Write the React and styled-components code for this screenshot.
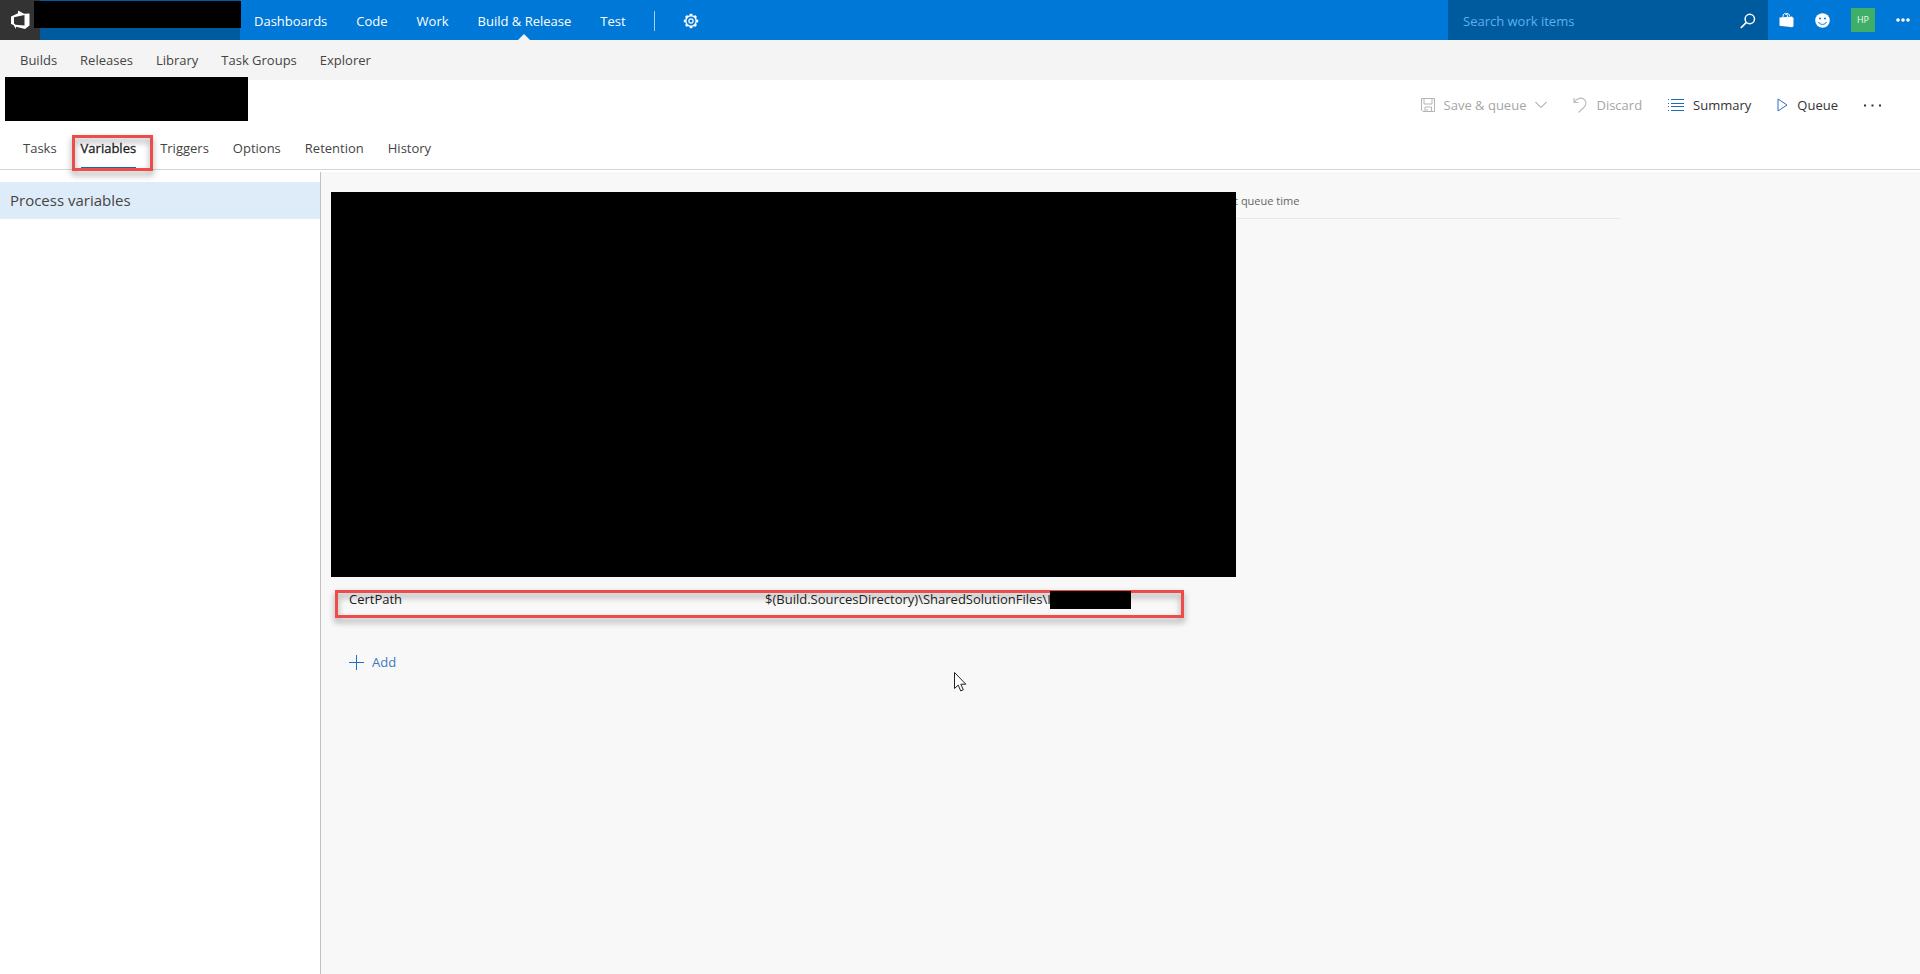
import React, { useState } from 'react';
import styled, { createGlobalStyle, css } from 'styled-components';

const GlobalStyle = createGlobalStyle`
  * {
    box-sizing: border-box;
  }
  body {
    margin: 0;
    background: #ffffff;
    color: #333333;
    font-family: 'Open Sans', 'Noto Sans', sans-serif;
    font-size: 13px;
    line-height: 20px;
  }
  button,
  input {
    font: inherit;
    color: inherit;
  }
`;

const Page = styled.div`
  min-height: 100vh;
  display: flex;
  flex-direction: column;
`;

const TopBar = styled.header`
  height: 40px;
  display: flex;
  background: #0078d7;
  color: #ffffff;
`;

const HomeLink = styled.a`
  width: 40px;
  display: flex;
  align-items: center;
  justify-content: center;
  background: #333333;
  color: #ffffff;
`;

const Project = styled.div`
  position: relative;
  width: 200px;
  background: #005a9e;
`;

const Redacted = styled.div`
  position: absolute;
  top: ${(props) => props.$top}px;
  left: ${(props) => props.$left}px;
  width: ${(props) => props.$width}px;
  height: ${(props) => props.$height}px;
  background: #000000;
`;

const InlineRedacted = styled.span`
  display: inline-block;
  width: 81px;
  height: 18px;
  margin-left: -1px;
  vertical-align: middle;
  position: relative;
  background: #000000;
`;

const HubNav = styled.nav`
  flex: 1;
  display: flex;
  align-items: stretch;
  gap: 1px;
`;

const HubLink = styled.a`
  position: relative;
  display: flex;
  align-items: center;
  padding: 2px 14px 0;
  color: #ffffff;
  text-decoration: none;
  white-space: nowrap;
  ${(props) =>
    props.$active &&
    css`
      &::after {
        content: '';
        position: absolute;
        bottom: 0;
        left: 50%;
        margin-left: -6px;
        border: 6px solid transparent;
        border-top-width: 0;
        border-bottom-color: #f4f4f4;
      }
    `}
`;

const Separator = styled.div`
  width: 1px;
  height: 20px;
  margin: 11px 13px 0;
  background: #a6d0f3;
`;

const Search = styled.form`
  width: 320px;
  display: flex;
  align-items: center;
  padding: 2px 12px 0 15px;
  background: #005a9e;
`;

const SearchInput = styled.input`
  flex: 1;
  min-width: 0;
  padding: 0;
  border: none;
  outline: none;
  background: transparent;
  color: #ffffff;
  &::placeholder {
    color: #5fb0ee;
    opacity: 1;
  }
`;

const IconButton = styled.button`
  display: flex;
  align-items: center;
  justify-content: center;
  padding: 0;
  border: none;
  background: none;
  cursor: pointer;
`;

const TopActions = styled.div`
  display: flex;
  align-items: center;
  gap: 21px;
  padding: 0 10px 0 11px;
`;

const Avatar = styled.button`
  width: 24px;
  height: 24px;
  padding: 0;
  border: none;
  background: #3fae68;
  color: #eafaf0;
  font-size: 9px;
  cursor: pointer;
`;

const SubNav = styled.nav`
  height: 40px;
  display: flex;
  align-items: center;
  gap: 23px;
  padding: 0 20px;
  background: #f4f4f4;
`;

const SubLink = styled.a`
  color: #444444;
  text-decoration: none;
  white-space: nowrap;
`;

const TitleBar = styled.div`
  position: relative;
  height: 50px;
  display: flex;
  justify-content: flex-end;
  align-items: center;
  gap: 26px;
  padding: 0 39px 0 260px;
`;

const Command = styled.button`
  display: flex;
  align-items: center;
  gap: 9px;
  padding: 0;
  border: none;
  background: none;
  color: #333333;
  white-space: nowrap;
  cursor: pointer;
  &:disabled {
    color: #a6a6a6;
    cursor: default;
  }
`;

const TabBar = styled.div`
  height: 40px;
  display: flex;
  gap: 24px;
  padding: 0 23px;
  border-bottom: 1px solid #d6d6d6;
`;

const TabItem = styled.div`
  position: relative;
  display: flex;
`;

const Tab = styled.button`
  padding: 0 0 2px;
  border: none;
  border-bottom: 2px solid ${(props) => (props.$active ? '#106ebe' : 'transparent')};
  background: none;
  color: ${(props) => (props.$active ? '#212121' : '#444444')};
  -webkit-text-stroke: ${(props) => (props.$active ? '0.3px' : '0')};
  cursor: pointer;
`;

/* red frame that points at the things to look at */
const Highlight = styled.div`
  position: absolute;
  top: ${(props) => props.$top}px;
  left: ${(props) => props.$left}px;
  width: ${(props) => props.$width}px;
  height: ${(props) => props.$height}px;
  border: 3px solid #ee4b4b;
  filter: drop-shadow(0 4px 3px rgba(0, 0, 0, 0.4));
  pointer-events: none;
`;

const Body = styled.div`
  flex: 1;
  display: flex;
  padding-top: 2px;
`;

const Sidebar = styled.aside`
  width: 321px;
  flex-shrink: 0;
  padding-top: 10px;
  border-right: 1px solid #c2c2c2;
`;

const SidebarItem = styled.button`
  display: block;
  width: 100%;
  height: 37px;
  padding: 0 10px 2px;
  border: none;
  background: #deecf9;
  color: #444444;
  font-size: 15px;
  text-align: left;
  cursor: pointer;
`;

const Main = styled.main`
  position: relative;
  flex: 1;
  min-width: 0;
  padding: 12px 20px;
  background: #f8f8f8;
`;

const VariableTable = styled.table`
  width: 100%;
  max-width: 1279px;
  table-layout: fixed;
  border-collapse: collapse;
`;

const HeadCell = styled.th`
  width: ${(props) => props.$width || 'auto'};
  height: 34px;
  padding: 0 8px;
  border-bottom: 1px solid #e8e8e8;
  color: #666666;
  font-size: 11px;
  font-weight: 400;
  text-align: left;
`;

const SpacerCell = styled.td`
  height: 364px;
  padding: 0;
`;

const Cell = styled.td`
  position: relative;
  height: 38px;
  padding: 0 8px 4px;
  color: #212121;
  white-space: nowrap;
`;

const AddButton = styled.button`
  display: flex;
  align-items: center;
  gap: 8px;
  margin: 32px 8px 0;
  padding: 0;
  border: none;
  background: none;
  color: #3a78c3;
  cursor: pointer;
`;

const Pointer = styled.svg`
  position: absolute;
  top: 500px;
  left: 633px;
`;

const LogoIcon = () => (
  <svg width="20" height="20" viewBox="0 0 20 20" aria-hidden="true">
    <path
      fill="#ffffff"
      fillRule="evenodd"
      d="M1 6.5 8 3.2V.5l6 3.3 5.5-.3v12L15 19l-9-2.2v2.3L3.5 15 1 14zM4 7.3v6.3l1.5 1.2 9 .8V4.9z"
    />
  </svg>
);

const teeth = [0, 45, 90, 135, 180, 225, 270, 315];

const GearIcon = () => (
  <svg width="16" height="16" viewBox="0 0 16 16" fill="none" stroke="#ffffff" aria-hidden="true">
    {teeth.map((angle) => (
      <path key={angle} d="M8 .8v2" strokeWidth="2.800" transform={`rotate(${angle} 8 8)`} />
    ))}
    <circle cx="8" cy="8" r="5.200" strokeWidth="1.400" />
    <circle cx="8" cy="8" r="2.100" strokeWidth="1.200" />
  </svg>
);

const SearchIcon = () => (
  <svg width="16" height="16" viewBox="0 0 16 16" fill="none" stroke="#ffffff" aria-hidden="true">
    <circle cx="9.800" cy="6" r="4.700" strokeWidth="1.500" />
    <path d="M6.400 9.400.8 15" strokeWidth="1.700" />
  </svg>
);

const BagIcon = () => (
  <svg width="15" height="16" viewBox="0 0 15 16" aria-hidden="true">
    <path d="M.5 5.500 13 4.500l1.500 1.800v8L13 15.300.5 13.800z" fill="#ffffff" />
    <path d="M4 6V4.200C4 .8 8 .4 8.400 3.500V6M6.500 3C7 .8 10.200.8 10.500 4" fill="none" stroke="#ffffff" />
  </svg>
);

const SmileIcon = () => (
  <svg width="15" height="15" viewBox="0 0 15 15" aria-hidden="true">
    <circle cx="7.500" cy="7.500" r="7.300" fill="#ffffff" />
    <circle cx="5" cy="5.500" r="1" fill="#0078d7" />
    <circle cx="10" cy="5.500" r="1" fill="#0078d7" />
    <path d="M3.500 9c1.500 3.200 6.500 3.200 8 0" fill="none" stroke="#0078d7" />
  </svg>
);

const TopDotsIcon = () => (
  <svg width="14" height="4" viewBox="0 0 14 4" fill="#ffffff" aria-hidden="true">
    <circle cx="2" cy="2" r="1.800" />
    <circle cx="7" cy="2" r="1.800" />
    <circle cx="12" cy="2" r="1.800" />
  </svg>
);

const SaveIcon = () => (
  <svg width="14" height="14" viewBox="0 0 14 14" fill="none" stroke="#b5b5b5" aria-hidden="true">
    <path d="M.5.500h13v13H2L.5 12zM3 .5v5.500h8V.5M4 13.500V9h6.500v4.500M6 11v2.500" />
  </svg>
);

const ChevronIcon = () => (
  <svg width="12" height="8" viewBox="0 0 12 8" fill="none" stroke="#8a8a8a" aria-hidden="true">
    <path d="m.5 1 5.500 5.500L11.500 1" />
  </svg>
);

const UndoIcon = () => (
  <svg width="14" height="16" viewBox="0 0 14 16" fill="none" stroke="#bdbdbd" strokeWidth="1.200" aria-hidden="true">
    <path d="M1 1v4.500h4.500M1.200 5.300C4 1 8.500.3 11 2.300c2.500 2 2.500 5.500.3 7.700L5.500 15.500" />
  </svg>
);

const ListIcon = () => (
  <svg width="16" height="12" viewBox="0 0 16 12" stroke="#1c6cb8" aria-hidden="true">
    <path d="M0 .5h1M0 4.500h1M0 7.500h1M0 11.500h1M3 .5h13M3 4.500h13M3 7.500h13M3 11.500h13" />
  </svg>
);

const PlayIcon = () => (
  <svg width="11" height="14" viewBox="0 0 11 14" fill="none" stroke="#2f6fc4" aria-hidden="true">
    <path d="M1 1v12l9-6z" />
  </svg>
);

const MoreIcon = () => (
  <svg width="17" height="3" viewBox="0 0 17 3" fill="#333333" aria-hidden="true">
    <path d="M0 .5h2v2H0zM7.500.5h2v2h-2zM15 .5h2v2h-2z" />
  </svg>
);

const PlusIcon = () => (
  <svg width="15" height="15" viewBox="0 0 15 15" stroke="#1f6fc0" aria-hidden="true">
    <path d="M7.500 0v15M0 7.500h15" />
  </svg>
);

const hubs = ['Dashboards', 'Code', 'Work', 'Build & Release', 'Test'];
const pages = ['Builds', 'Releases', 'Library', 'Task Groups', 'Explorer'];
const tabs = ['Tasks', 'Variables', 'Triggers', 'Options', 'Retention', 'History'];

const App = () => {
  const [activeTab, setActiveTab] = useState('Variables');

  return (
    <Page>
      <GlobalStyle />
      <TopBar>
        <HomeLink href="#" aria-label="Home">
          <LogoIcon />
        </HomeLink>
        <Project>
          <Redacted $top={1} $left={-6} $width={207} $height={27} />
        </Project>
        <HubNav>
          {hubs.map((hub) => (
            <HubLink key={hub} href="#" $active={hub === 'Build & Release'}>
              {hub}
            </HubLink>
          ))}
          <Separator />
          <HubLink href="#" aria-label="Settings">
            <GearIcon />
          </HubLink>
        </HubNav>
        <Search>
          <SearchInput type="text" placeholder="Search work items" aria-label="Search work items" />
          <IconButton type="button" aria-label="Search">
            <SearchIcon />
          </IconButton>
        </Search>
        <TopActions>
          <IconButton aria-label="Marketplace">
            <BagIcon />
          </IconButton>
          <IconButton aria-label="Feedback">
            <SmileIcon />
          </IconButton>
          <Avatar>HP</Avatar>
          <IconButton aria-label="More">
            <TopDotsIcon />
          </IconButton>
        </TopActions>
      </TopBar>

      <SubNav>
        {pages.map((page) => (
          <SubLink key={page} href="#">
            {page}
          </SubLink>
        ))}
      </SubNav>

      <TitleBar>
        <Redacted $top={-3} $left={5} $width={243} $height={44} />
        <Command disabled>
          <SaveIcon />
          Save & queue
          <ChevronIcon />
        </Command>
        <Command disabled>
          <UndoIcon />
          Discard
        </Command>
        <Command>
          <ListIcon />
          Summary
        </Command>
        <Command>
          <PlayIcon />
          Queue
        </Command>
        <IconButton aria-label="More actions">
          <MoreIcon />
        </IconButton>
      </TitleBar>

      <TabBar role="tablist">
        {tabs.map((tab) => (
          <TabItem key={tab}>
            <Tab
              role="tab"
              aria-selected={tab === activeTab}
              $active={tab === activeTab}
              onClick={() => setActiveTab(tab)}
            >
              {tab}
            </Tab>
            {tab === 'Variables' && <Highlight $top={5} $left={-9} $width={81} $height={36} />}
          </TabItem>
        ))}
      </TabBar>

      <Body>
        <Sidebar>
          <SidebarItem>Process variables</SidebarItem>
        </Sidebar>
        <Main>
          <VariableTable>
            <thead>
              <tr>
                <HeadCell $width="416px" />
                <HeadCell $width="463px" />
                <HeadCell>at queue time</HeadCell>
              </tr>
            </thead>
            <tbody>
              <tr>
                <SpacerCell colSpan={3} />
              </tr>
              <tr>
                <Cell>
                  CertPath
                  <Highlight $top={8} $left={-6} $width={849} $height={28} />
                </Cell>
                <Cell>
                  $(Build.SourcesDirectory)\SharedSolutionFiles\I
                  <InlineRedacted />
                </Cell>
                <Cell />
              </tr>
            </tbody>
          </VariableTable>
          <AddButton>
            <PlusIcon />
            Add
          </AddButton>
          <Redacted $top={20} $left={10} $width={905} $height={385} />
          <Pointer width="13" height="20" viewBox="0 0 13 20" aria-hidden="true">
            <path d="M.5.500v16l3.700-3.400 2.500 5.800 2.600-1.100-2.500-5.600h5z" fill="#ffffff" stroke="#222222" />
          </Pointer>
        </Main>
      </Body>
    </Page>
  );
};

export default App;
